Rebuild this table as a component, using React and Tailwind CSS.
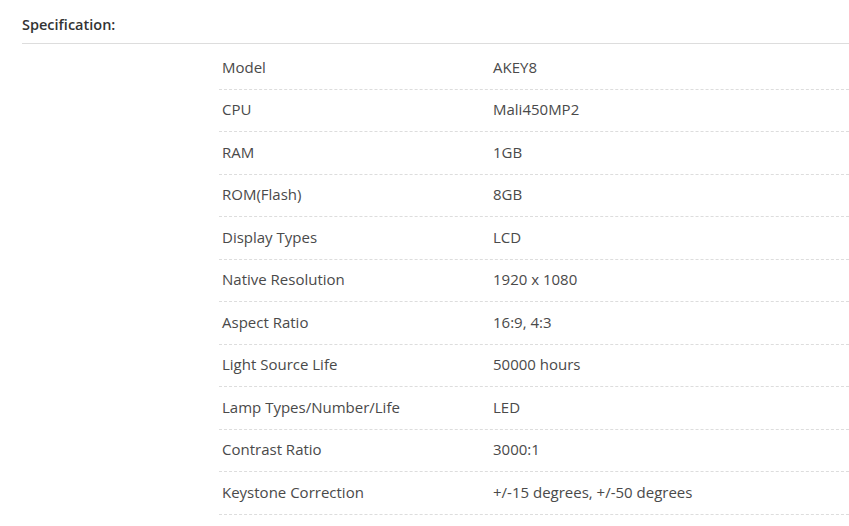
import React from 'react';

const specs = [
  ['Model', 'AKEY8'],
  ['CPU', 'Mali450MP2'],
  ['RAM', '1GB'],
  ['ROM(Flash)', '8GB'],
  ['Display Types', 'LCD'],
  ['Native Resolution', '1920 x 1080'],
  ['Aspect Ratio', '16:9, 4:3'],
  ['Light Source Life', '50000 hours'],
  ['Lamp Types/Number/Life', 'LED'],
  ['Contrast Ratio', '3000:1'],
  ['Keystone Correction', '+/-15 degrees, +/-50 degrees'],
];

const App = () => {
  return (
    <div className="min-h-screen bg-white pl-[22px] font-['Open_Sans',sans-serif]">
      <h2 className="pt-[15px] pb-[9px] border-b border-[#dddddd] text-[14.5px] font-semibold leading-[19px] text-[#333333]">
        Specification:
      </h2>

      <div className="ml-[197px] mt-[3px]">
        {specs.map(([label, value]) => (
          <div
            key={label}
            className="flex items-center h-[42.5px] pb-[2px] border-b border-dashed border-[#dddddd] text-[15px] text-[#4a4a4a]"
          >
            <div className="w-[271px] pl-[3px]">{label}</div>
            <div className="flex-1 pl-[3px]">{value}</div>
          </div>
        ))}
      </div>
    </div>
  );
};

export default App;
